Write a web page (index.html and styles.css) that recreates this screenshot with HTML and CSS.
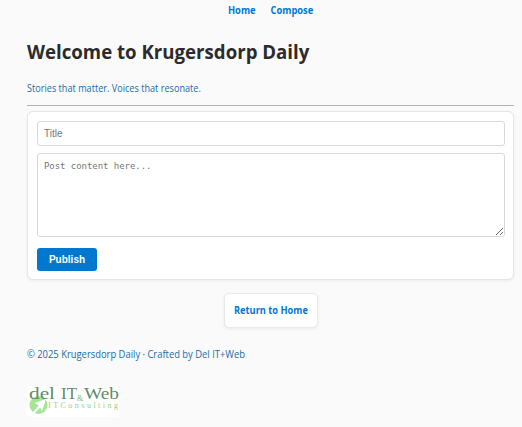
FILE: index.html
```html
<!DOCTYPE html>
<html lang="en">
<head>
<meta charset="utf-8">
<title>Krugersdorp Daily</title>
<link rel="stylesheet" href="styles.css">
</head>
<body>
<nav class="nav"><a class="home" href="#">Home</a><a class="compose" href="#">Compose</a></nav>
<header>
  <h1><span>Welcome to Krugersdorp Daily</span></h1>
  <p class="tagline"><span>Stories that matter. Voices that resonate.</span></p>
</header>
<hr>
<form class="card">
  <input type="text" placeholder="Title">
  <textarea placeholder="Post content here..."></textarea>
  <button type="button">Publish</button>
</form>
<a class="return" href="#"><span>Return to Home</span></a>
<footer>
  <p class="credit"><span>© 2025 Krugersdorp Daily · Crafted by Del IT+Web</span></p>
  <svg class="logo" width="92" height="31" viewBox="0 0 92 31" role="img" aria-label="del IT and Web">
    <rect width="92" height="31" rx="4" fill="#fff"/>
    <circle cx="11.500" cy="19" r="9" fill="#a5e695"/>
    <path d="M4.500 29L14 19" stroke="#fff" stroke-width="2.200" fill="none"/>
    <path d="M19 13L7.500 17L11 19L13 21.500L15 25Z" fill="#fff"/>
    <g class="logo-name">
      <text x="2" y="12.500" textLength="26" lengthAdjust="spacingAndGlyphs">del</text>
      <text x="34" y="12.500" textLength="16" lengthAdjust="spacingAndGlyphs">IT</text>
      <text class="amp" x="50" y="14.500">&amp;</text>
      <text x="57" y="12.500" textLength="35" lengthAdjust="spacingAndGlyphs">Web</text>
    </g>
    <text class="logo-sub" x="21" y="22" textLength="70">ITConsulting</text>
  </svg>
</footer>
</body>
</html>
```
FILE: styles.css
```css
* { box-sizing: border-box; }
body {
  margin: 0;
  padding: 3px 8px 0 27px;
  height: 427px;
  overflow: hidden;
  background: #fafafa;
  font: 10px/15px "Open Sans", "Noto Sans", sans-serif;
  color: #1b6ca8;
}
a { color: #0078d4; font-weight: 700; text-decoration: none; }
.nav { display: flex; justify-content: center; gap: 13px; height: 15px; padding-left: 1px; }
.nav a { transform: scaleX(.935); }
h1 { margin: 20px 0 0; font-size: 20px; line-height: 28px; color: #2b2b2b; white-space: nowrap; }
p { margin: 0; white-space: nowrap; }
h1 span, p span { display: inline-block; transform-origin: left; }
h1 span { transform: scaleX(.932); }
.tagline { margin-top: 15px; }
.tagline span { transform: scaleX(.912); }
.credit span { transform: scaleX(.939); }
hr { margin: 9px 0 5px; border: 0; height: 1px; background: #b2b2b2; }
.card {
  display: flex;
  flex-direction: column;
  align-items: flex-start;
  height: 169px;
  padding: 9px 8px 0 9px;
  background: #fff;
  border: 1px solid #e5e5e5;
  border-radius: 6px;
  box-shadow: 0 1px 3px rgba(0, 0, 0, .06);
}
input, textarea {
  display: block;
  flex-shrink: 0;
  width: 100%;
  margin: 0;
  padding: 6px;
  border: 1px solid #d9d9d9;
  border-radius: 3px;
  background: #fff;
  outline: 0;
}
input { height: 25px; font: 10px "Liberation Sans", Arial, sans-serif; }
textarea { height: 84px; margin-top: 7px; font: 9px/12px "DejaVu Sans Mono", monospace; letter-spacing: -.05px; resize: vertical; }
::placeholder { color: #757575; }
button {
  flex-shrink: 0;
  width: 60px;
  height: 23px;
  margin-top: 11px;
  padding: 0;
  border: 0;
  border-radius: 3px;
  background: #0078d0;
  color: #fff;
  font: 700 10px "Liberation Sans", Arial, sans-serif;
}
.return {
  display: flex;
  align-items: center;
  justify-content: center;
  width: 94px;
  height: 35px;
  margin: 13px auto 0;
  background: #fff;
  border: 1px solid #e9e9e9;
  border-radius: 5px;
  box-shadow: 0 1px 3px rgba(0, 0, 0, .07);
  white-space: nowrap;
}
.return span { transform: scaleX(.925); }
footer { margin-top: 19px; }
.logo { display: block; margin-top: 24px; overflow: visible; }
.logo-name { font: 16px "Liberation Serif", serif; fill: #618b68; }
.logo-name .amp { font-size: 8px; fill: #79bd77; }
.logo-sub { font: 8px "Liberation Serif", serif; fill: #8fd67a; }
```
